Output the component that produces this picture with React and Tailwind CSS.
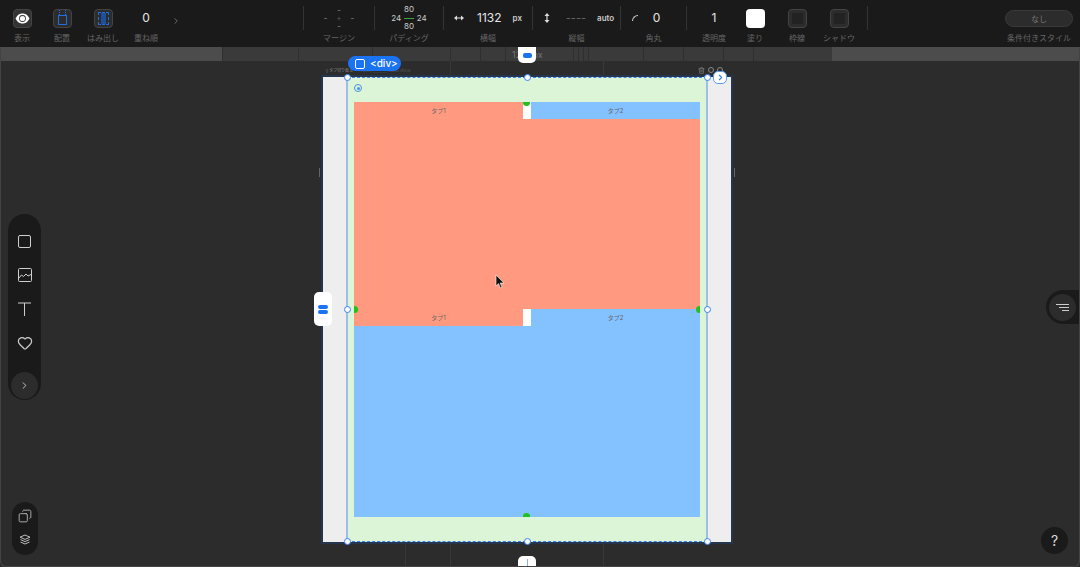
import { ChevronRight, Heart, Copy, Trash2 } from 'lucide-react';

const font = { fontFamily: '"Inter", "Noto Sans CJK JP", sans-serif' };

// widths of the ruler sections between the lines of the dark strip
const rulerStops = [76, 74, 78, 30, 25, 15, 5, 5, 5, 38, 5, 5, 5, 55, 40, 40, 30, 72];

// toolbar tool: content centred above a small grey caption
function Tool({ label, width, children }) {
  return (
    <div className={`flex shrink-0 flex-col items-center ${width}`}>
      <div className="flex h-[36px] w-full items-center justify-center">{children}</div>
      <span className="-mt-[3px] whitespace-nowrap text-[8px] leading-[10px] text-[#666666]">{label}</span>
    </div>
  );
}

function Divider({ className = '' }) {
  return <div className={`mt-[6px] h-[24px] w-px shrink-0 self-start bg-[#333333] ${className}`} />;
}

function Swatch({ children, className = '' }) {
  return (
    <div className={`flex h-[19px] w-[19px] items-center justify-center rounded-[4px] border border-[#444444] bg-[#2c2c2c] ${className}`}>
      {children}
    </div>
  );
}

function Handle({ className }) {
  return <div className={`absolute h-[7px] w-[7px] rounded-full border border-[#3b82f6] bg-white ${className}`} />;
}

function TabRow() {
  return (
    <div className="flex h-[17px] shrink-0 text-[6px] leading-[17px] text-[#666666]">
      <div className="flex-1 bg-[#ff9a80] text-center">タブ1</div>
      <div className="w-[8px] bg-white" />
      <div className="flex-1 bg-[#84c1ff] text-center">タブ2</div>
    </div>
  );
}

export default function App() {
  return (
    <div className="relative flex h-[567px] w-[1080px] flex-col overflow-hidden bg-[#2c2c2c]" style={font}>
      {/* top toolbar */}
      <div className="flex h-[47px] shrink-0 items-start bg-[#1a1a1a]">
        <div className="flex w-[190px] pl-[7px]">
          <Tool label="表示" width="w-[30px]">
            <Swatch className="!bg-[#333333]">
              <svg width="15" height="11" viewBox="0 0 15 11">
                <path d="M0.5 5.5 C3 1 5 0.5 7.5 0.5 C10 0.5 12 1 14.5 5.5 C12 10 10 10.5 7.5 10.5 C5 10.5 3 10 0.5 5.5 Z" fill="#ffffff" />
                <circle cx="7.5" cy="5.5" r="3.4" fill="#333333" />
                <circle cx="7.5" cy="5.5" r="2.6" fill="#ffffff" />
              </svg>
            </Swatch>
          </Tool>
          <Tool label="配置" width="w-[30px] ml-[10px]">
            <Swatch>
              <svg width="11" height="17" viewBox="0 0 11 17" fill="none" stroke="#1f6fe0">
                <rect x="1.5" y="5.5" width="8" height="9" />
                <path d="M2.5 0 V5 M8.5 0 V5" strokeDasharray="1 1" />
              </svg>
            </Swatch>
          </Tool>
          <Tool label="はみ出し" width="w-[30px] ml-[11px]">
            <Swatch>
              <div className="flex h-[13px] w-[11px] justify-center rounded-[1px] border border-dashed border-[#1f6fe0]">
                <div className="w-[5px] bg-[#1c4f9c]" />
              </div>
            </Swatch>
          </Tool>
          <Tool label="重ね順" width="w-[30px] ml-[13px]">
            <span className="text-[12px] text-[#e5e5e5]">0</span>
          </Tool>
          <ChevronRight size={10} className="ml-[10px] mt-[16px] text-[#777777]" />
        </div>

        <div className="ml-[113px] flex">
          <Divider />
          <Tool label="マージン" width="w-[70px]">
            <div className="grid w-[40px] grid-cols-3 place-items-center text-[8px] leading-[8px] text-[#8a8a8a]">
              <span />
              <span>-</span>
              <span />
              <span>-</span>
              <span className="text-[#555555]">+</span>
              <span>-</span>
              <span />
              <span>-</span>
              <span />
            </div>
          </Tool>
          <Divider />
          <Tool label="パディング" width="w-[68px]">
            <div className="grid w-[38px] grid-cols-3 place-items-center text-[8px] leading-[8.5px] text-[#cccccc]">
              <span />
              <span>80</span>
              <span />
              <span>24</span>
              <span className="h-px w-[10px] bg-[#3aa53a]" />
              <span>24</span>
              <span />
              <span>80</span>
              <span />
            </div>
          </Tool>
          <Divider />
          <Tool label="横幅" width="w-[88px]">
            <div className="flex items-center">
              <svg width="10" height="6" viewBox="0 0 10 6" fill="#dddddd">
                <path d="M0 3 L3 0.5 V2.4 H7 V0.5 L10 3 L7 5.5 V3.6 H3 V5.5 Z" />
              </svg>
              <span className="ml-[13px] text-[12px] text-[#e5e5e5]">1132</span>
              <span className="ml-[11px] text-[8px] font-semibold text-[#cccccc]">px</span>
            </div>
          </Tool>
          <Divider />
          <Tool label="縦幅" width="w-[87px]">
            <div className="flex items-center pl-[5px]">
              <svg width="6" height="10" viewBox="0 0 6 10" fill="#dddddd">
                <path d="M3 0 L5.5 3 H3.6 V7 H5.5 L3 10 L0.5 7 H2.4 V3 H0.5 Z" />
              </svg>
              <span className="ml-[16px] text-[11px] text-[#666666]">----</span>
              <span className="ml-[11px] text-[8px] font-semibold text-[#cccccc]">auto</span>
            </div>
          </Tool>
          <Divider />
          <Tool label="角丸" width="w-[65px]">
            <div className="-ml-[15px] flex items-center">
              <div className="h-[6px] w-[6px] rounded-tl-[6px] border-l border-t border-[#cccccc]" />
              <span className="ml-[15px] text-[12px] text-[#e5e5e5]">0</span>
            </div>
          </Tool>
          <Divider />
          <Tool label="透明度" width="w-[54px]">
            <span className="text-[12px] text-[#e5e5e5]">1</span>
          </Tool>
          <Tool label="塗り" width="w-[30px] -ml-[1px]">
            <div className="h-[19px] w-[19px] rounded-[4px] bg-white" />
          </Tool>
          <Tool label="枠線" width="w-[30px] ml-[12px]">
            <Swatch><div className="h-[11px] w-[11px] bg-[#222222]" /></Swatch>
          </Tool>
          <Tool label="シャドウ" width="w-[30px] ml-[12px]">
            <Swatch><div className="h-[11px] w-[11px] bg-[#222222]" /></Swatch>
          </Tool>
          <Divider className="ml-[13px]" />
        </div>

        <div className="ml-auto mr-[7px] flex w-[68px] flex-col items-center">
          <div className="mt-[10px] flex h-[17px] w-[68px] items-center justify-center rounded-full border border-[#3a3a3a] bg-[#2c2c2c] text-[8px] text-[#777777]">
            なし
          </div>
          <span className="mt-[6px] whitespace-nowrap text-[8px] leading-[10px] text-[#666666]">条件付きスタイル</span>
        </div>
      </div>

      {/* ruler strip */}
      <div className="flex h-[14px] shrink-0 bg-[#4c4c4c]">
        <div className="w-[222px]" />
        <div className="flex w-[610px] bg-[#3a3a3a]">
          {rulerStops.map((w, i) => (
            <div key={i} className="border-l border-[#2f2f2f]" style={{ width: w }} />
          ))}
        </div>
      </div>

      {/* faint guide lines on the canvas */}
      <div className="absolute left-[450px] top-[61px] h-[16px] w-px bg-[#383838]" />
      <div className="absolute left-[603px] top-[61px] h-[16px] w-px bg-[#383838]" />
      <div className="absolute left-[405px] top-[543px] h-[24px] w-px bg-[#383838]" />
      <div className="absolute left-[450px] top-[543px] h-[24px] w-px bg-[#383838]" />
      <div className="absolute left-[603px] top-[543px] h-[24px] w-px bg-[#383838]" />

      {/* canvas overlays: left tools */}
      <div className="absolute left-[8px] top-[214px] flex h-[186px] w-[33px] flex-col items-center rounded-full bg-[#1a1a1a] pt-[21px] text-[#cfcfcf]">
        <div className="h-[13px] w-[13px] rounded-[2px] border border-[#cfcfcf]" />
        <svg className="mt-[20px]" width="14" height="14" viewBox="0 0 14 14" fill="none" stroke="#cfcfcf">
          <rect x="0.5" y="0.5" width="13" height="13" rx="1" />
          <path d="M1 10 L3.5 7 L5.5 8.5 L8 6 L10 8 L13 6.5" />
        </svg>
        <svg className="mt-[20px]" width="13" height="14" viewBox="0 0 13 14" fill="none" stroke="#cfcfcf">
          <path d="M0 1 H13 M6.5 1 V14" />
        </svg>
        <Heart size={16} strokeWidth={1.8} className="mt-[19px]" />
        <div className="mt-[21px] flex h-[27px] w-[27px] items-center justify-center rounded-full bg-[#2c2c2c]">
          <ChevronRight size={11} />
        </div>
      </div>

      <div className="absolute left-[12px] top-[502px] flex h-[53px] w-[26px] flex-col items-center rounded-full bg-[#1a1a1a] pt-[7px] text-[#bdbdbd]">
        <Copy size={14} strokeWidth={1.5} className="scale-x-[-1]" />
        <svg className="mt-[11px]" width="12" height="12" viewBox="0 0 12 12" fill="none" stroke="#bdbdbd">
          <path d="M6 1 L11 3.2 L6 5.4 L1 3.2 Z" />
          <path d="M1.5 5.6 L6 7.6 L10.5 5.6" />
          <path d="M1.5 8 L6 10 L10.5 8" />
        </svg>
      </div>

      {/* right filter button */}
      <div className="absolute left-[1046px] top-[290px] flex h-[34px] w-[34px] items-center rounded-l-full bg-[#1a1a1a] pl-[3px]">
        <div className="flex h-[27px] w-[27px] flex-col items-center justify-center gap-[2px] rounded-full bg-[#2c2c2c]">
          <div className="h-px w-[13px] bg-[#cccccc]" />
          <div className="ml-[2px] h-px w-[10px] bg-[#cccccc]" />
          <div className="ml-[5px] h-px w-[7px] bg-[#cccccc]" />
        </div>
      </div>

      {/* help */}
      <div className="absolute left-[1041px] top-[527px] flex h-[27px] w-[27px] items-center justify-center rounded-full bg-[#1a1a1a] text-[14px] text-[#dddddd]">
        ?
      </div>

      {/* page label above the artboard */}
      <div className="absolute left-[326px] top-[68px] flex items-center gap-[2px] text-[4px] leading-[6px] text-[#888888]">
        <span>▯ タブ切り替え</span>
        <span className="ml-[4px] text-[#555555]">https://________studio.site/8</span>
      </div>
      <div className="absolute left-[698px] top-[67px] flex gap-[3px] text-[#888888]">
        <Trash2 size={7} />
        <div className="h-[6px] w-[6px] rounded-full border border-[#888888]" />
        <div className="h-[6px] w-[6px] rounded-full border border-[#888888]" />
      </div>

      {/* artboard */}
      <div className="absolute left-[323px] top-[77px] flex h-[465px] w-[408px] justify-center bg-[#eeeeee] shadow-[0_0_0_2px_#25354d]">
        <div className="flex h-full w-[362px] flex-col border-x-2 border-[#9bbfe6] bg-[#dcf5d6] px-[6px] py-[25px]">
          <div className="flex flex-1 flex-col">
            <div className="flex h-[207px] shrink-0 flex-col bg-[#ff9a80]">
              <TabRow />
            </div>
            <div className="flex flex-1 flex-col bg-[#84c1ff]">
              <TabRow />
            </div>
          </div>
        </div>
      </div>

      {/* selection outline */}
      <div className="absolute left-[347px] top-[77px] h-[465px] w-[360px] border-y border-dashed border-[#3b82f6]" />
      <Handle className="left-[344px] top-[74px]" />
      <Handle className="left-[524px] top-[74px]" />
      <Handle className="left-[704px] top-[74px]" />
      <Handle className="left-[344px] top-[306px]" />
      <Handle className="left-[704px] top-[306px]" />
      <Handle className="left-[344px] top-[538px]" />
      <Handle className="left-[524px] top-[538px]" />
      <Handle className="left-[704px] top-[538px]" />

      {/* green padding markers */}
      <div className="absolute left-[523px] top-[102px] h-[4px] w-[7px] rounded-b-full bg-[#22c01f]" />
      <div className="absolute left-[523px] top-[513px] h-[4px] w-[7px] rounded-t-full bg-[#22c01f]" />
      <div className="absolute left-[354px] top-[306px] h-[7px] w-[4px] rounded-r-full bg-[#22c01f]" />
      <div className="absolute left-[696px] top-[306px] h-[7px] w-[4px] rounded-l-full bg-[#22c01f]" />

      {/* element tag */}
      <div className="absolute left-[348px] top-[56px] flex h-[15px] w-[53px] items-center rounded-full bg-[#1a73f0] pl-[7px] text-[10px] font-medium text-white">
        <div className="h-[10px] w-[10px] rounded-[2px] border border-white" />
        <span className="ml-[5px]">&lt;div&gt;</span>
      </div>

      {/* size grips */}
      <span className="absolute left-[512px] top-[49px] text-[9px] leading-[11px] text-[#777777]">1280px</span>
      <div className="absolute left-[518px] top-[47px] flex h-[16px] w-[18px] items-center justify-center rounded-b-[5px] bg-white">
        <div className="h-[5px] w-[9px] rounded-[2px] bg-[#1a73f0]" />
      </div>
      <div className="absolute left-[518px] top-[556px] flex h-[11px] w-[18px] justify-center rounded-t-[5px] bg-white">
        <div className="mt-[3px] h-[8px] w-px bg-[#84b4ee]" />
      </div>
      <div className="absolute left-[314px] top-[292px] flex h-[34px] w-[18px] flex-col items-center justify-center gap-[1px] rounded-[5px] bg-white">
        <div className="h-[4px] w-[10px] rounded-full bg-[#1a73f0]" />
        <div className="h-[4px] w-[10px] rounded-full bg-[#1a73f0]" />
      </div>

      {/* next button and radio */}
      <div className="absolute left-[713px] top-[71px] flex h-[13px] w-[14px] items-center justify-center rounded-[5px] border border-[#5b9cf0] bg-white text-[#2f7de8]">
        <ChevronRight size={9} strokeWidth={3} />
      </div>
      <div className="absolute left-[354px] top-[84px] flex h-[8px] w-[8px] items-center justify-center rounded-full border border-[#4a8fe8]">
        <div className="h-[3px] w-[3px] rounded-full bg-[#4a8fe8]" />
      </div>

      {/* cursor */}
      <svg className="absolute left-[495px] top-[275px]" width="10" height="14" viewBox="0 0 10 14">
        <path d="M1 0 L1 11 L3.5 8.6 L5.4 13 L7 12.2 L5.2 8 L9 8 Z" fill="#111111" stroke="#ffffff" strokeWidth="0.6" />
      </svg>

      {/* side ticks next to the artboard */}
      <div className="absolute left-[319px] top-[168px] h-[9px] w-px bg-[#666666]" />
      <div className="absolute left-[734px] top-[168px] h-[9px] w-px bg-[#666666]" />

      {/* window edge */}
      <div className="pointer-events-none absolute inset-x-0 bottom-0 top-[47px] rounded-b-[6px] border-x border-b border-[#444444]" />
    </div>
  );
}
